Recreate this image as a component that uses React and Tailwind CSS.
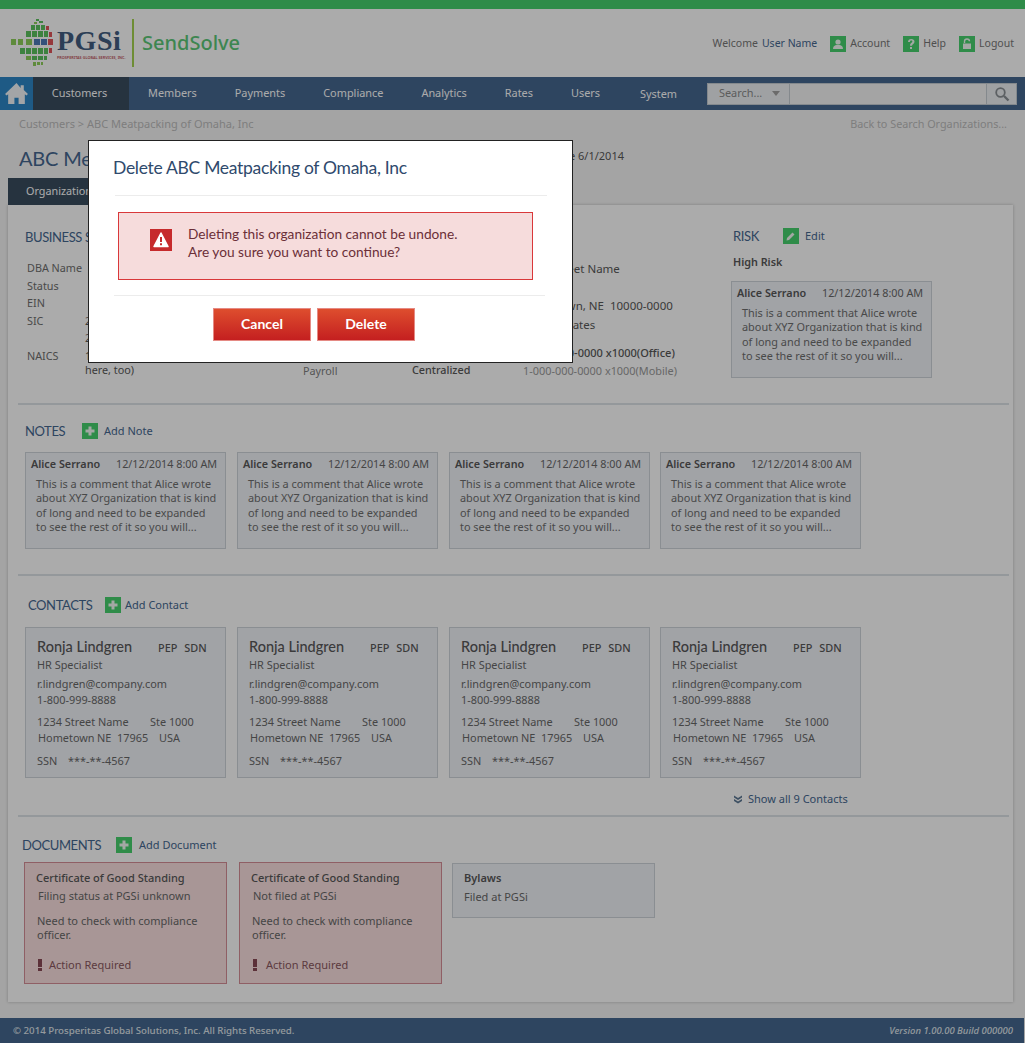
import React from "react";

const NOTE = ["This is a comment that Alice wrote", "about XYZ Organization that is kind", "of long and need to be expanded", "to see the rest of it so you will..."];

function GreenBox({ children, className = "" }) {
  return (
    <span className={"flex h-4 w-4 shrink-0 items-center justify-center bg-[#46d16d] " + className}>
      <svg viewBox="0 0 16 16" className="h-4 w-4">{children}</svg>
    </span>
  );
}

const Plus = () => (
  <GreenBox>
    <path d="M6.500 3.500h3v3h3v3h-3v3h-3v-3h-3v-3h3z" fill="#f4fbf5" />
  </GreenBox>
);

function Logo() {
  const squares = [
    [35, 21, 3, 2, "g"], [38, 23, 4, 2, "g"], [33, 24, 3, 2, "l"],
    [30, 27, 4, 5, "g"], [35, 27, 4, 5, "g"], [40, 27, 4, 5, "g"], [45, 28, 3, 4, "r"],
    [25, 33, 5, 6, "g"], [31, 33, 5, 6, "g"], [37, 33, 5, 6, "g"], [43, 33, 4, 6, "g"], [48, 34, 3, 5, "r"],
    [10, 41, 5, 6, "l"], [17, 41, 5, 6, "l"], [25, 41, 6, 6, "l"], [33, 41, 6, 6, "b"], [40, 41, 6, 6, "b"], [47, 41, 5, 6, "r"],
    [19, 50, 5, 6, "g"], [25, 50, 5, 6, "g"], [31, 50, 5, 6, "g"], [37, 50, 5, 6, "g"], [43, 50, 4, 6, "g"], [48, 50, 3, 5, "r"],
    [25, 58, 5, 4, "l"], [31, 58, 5, 4, "g"], [37, 58, 5, 4, "g"], [43, 58, 3, 4, "g"],
    [32, 64, 3, 4, "l"], [36, 64, 3, 3, "l"], [40, 64, 2, 3, "l"],
  ];
  const col = { g: "#5bc25f", l: "#8ed05a", r: "#e0565a", b: "#4d79b8" };
  return (
    <svg width="44" height="50" viewBox="9 20 44 50" className="shrink-0">
      {squares.map((r, i) => (
        <rect key={i} x={r[0]} y={r[1]} width={r[2]} height={r[3]} fill={col[r[4]]} />
      ))}
    </svg>
  );
}

function NoteCard({ className = "" }) {
  return (
    <div className={"h-[97px] w-[201px] shrink-0 border border-[#ced4da] bg-[#f0f3f8] px-[5px] pt-[2px] " + className}>
      <div className="flex whitespace-nowrap text-[10.800px] leading-[18px]">
        <span className="w-[85px] font-semibold text-[#585858]">Alice Serrano</span>
        <span className="text-[#686868]">12/12/2014 8:00 AM</span>
      </div>
      <div className="ml-[5px] mt-[4px] text-[10.900px] leading-[14.300px] text-[#6e6e6e]">
        {NOTE.map((l) => (
          <div key={l} className="whitespace-nowrap">{l}</div>
        ))}
      </div>
    </div>
  );
}

function ContactCard() {
  return (
    <div className="h-[151px] w-[201px] shrink-0 border border-[#ced4da] bg-[#f0f3f8] pl-[11px] pt-[9px] text-[10.900px] text-[#686868]">
      <div className="flex items-end leading-[20px]">
        <span className="w-[121px] font-['Lato',sans-serif] text-[14.500px] font-medium text-[#585858]">Ronja Lindgren</span>
        <span className="font-medium leading-[18px] text-[#585858]">PEP</span>
        <span className="ml-[7px] font-medium leading-[18px] text-[#585858]">SDN</span>
      </div>
      <div className="leading-[16px]">HR Specialist</div>
      <div className="mt-[3px] leading-[16px]">r.lindgren@company.com</div>
      <div className="leading-[16px]">1-800-999-8888</div>
      <div className="mt-[6px] flex leading-[16px]">
        <span className="w-[113px]">1234 Street Name</span>
        <span>Ste 1000</span>
      </div>
      <div className="ml-px flex leading-[16px]">
        <span className="w-[59px]">Hometown</span>
        <span className="w-[20px]">NE</span>
        <span className="w-[42px]">17965</span>
        <span>USA</span>
      </div>
      <div className="mt-[7px] flex leading-[16px]">
        <span className="w-[31px]">SSN</span>
        <span>***-**-4567</span>
      </div>
    </div>
  );
}

function DocCard({ sub, className = "", markClass = "mr-[7px]" }) {
  return (
    <div className={"h-[122px] w-[203px] shrink-0 border border-[#d58e97] bg-[#fbe0e0] pl-[11px] pt-[7px] text-[11px] " + className}>
      <div className="font-medium leading-[16px] text-[#585858]">Certificate of Good Standing</div>
      <div className="ml-[2px] mt-[2px] leading-[16px] text-[#686868]">{sub}</div>
      <div className="ml-px mt-[10px] leading-[14px] text-[#686868]">
        Need to check with compliance<br />officer.
      </div>
      <div className="mt-[15px] flex items-center leading-[16px] text-[#8a5860]">
        <span className={"ml-[2px] h-[12px] w-[4px] bg-[linear-gradient(#8a4a55_0_65%,transparent_65%_78%,#8a4a55_78%)] " + markClass}></span>
        Action Required
      </div>
    </div>
  );
}

function Row({ label, children, inset = false, leading = "leading-[17.500px]" }) {
  return (
    <div className={"flex text-[10.800px] text-[#6e6e6e] " + leading}>
      <span className="w-[58px] shrink-0">{label}</span>
      <span className={"text-[#585858] " + (inset ? "ml-[6px]" : "")}>{children}</span>
    </div>
  );
}

const H2 = ({ className = "", children }) => (
  <h2 className={"shrink-0 whitespace-nowrap font-['Lato',sans-serif] text-[13px] leading-[16px] tracking-[-0.4px] text-[#456790] " + className}>{children}</h2>
);

const Divider = ({ className = "" }) => (
  <div className={"ml-[10px] h-[2px] w-[991px] bg-[#dde3e8] " + className}></div>
);

const navItems = ["Members", "Payments", "Compliance", "Analytics", "Rates", "Users"];

export default function App() {
  return (
    <div className="relative h-[1043px] w-[1025px] overflow-hidden bg-[#f5f5f5] font-['Noto_Sans','Open_Sans',sans-serif]">
      <div className="h-[9px] bg-[#46d16d]"></div>

      {/* header */}
      <header className="flex h-[68px] items-center bg-white pl-[10px] pr-[11px]">
        <Logo />
        <div className="ml-[3px] mt-[1px] flex w-[64px] flex-col">
          <span className="font-['Liberation_Serif',serif] text-[28px] font-bold leading-[28px] tracking-[0.5px] text-[#425d80]">PGSi</span>
          <span className="whitespace-nowrap text-[3.800px] font-semibold leading-[5px] text-[#c0545a]">PROSPERITAS GLOBAL SERVICES, INC.</span>
        </div>
        <span className="ml-[11px] h-[48px] w-[2px] bg-[#a5d24f]"></span>
        <span className="ml-[8px] text-[20px] font-medium leading-none text-[#5cc878]">SendSolve</span>
        <div className="ml-auto mt-[2px] flex items-center text-[10.500px] text-[#777777]">
          <span>Welcome</span>
          <span className="ml-[4px] text-[#456790]">User Name</span>
          <GreenBox className="ml-[13px]">
            <circle cx="8" cy="6" r="2.600" fill="#f4fbf5" />
            <path d="M3 13c0-3 2-4 3.500-4h3c1.500 0 3.500 1 3.500 4z" fill="#f4fbf5" />
          </GreenBox>
          <span className="ml-[4px]">Account</span>
          <GreenBox className="ml-[13px]">
            <path d="M5 6c0-2 1.300-3 3.200-3S11.500 4 11.500 5.800c0 2.200-2.500 2.300-2.500 4H7c0-2.800 2.300-2.900 2.300-4.200 0-.6-.4-1-1.100-1-.8 0-1.100.5-1.200 1.400zM7 11h2v2H7z" fill="#f4fbf5" />
          </GreenBox>
          <span className="ml-[4px]">Help</span>
          <GreenBox className="ml-[13px]">
            <path d="M4 7.500h8V13H4z" fill="#f4fbf5" />
            <path d="M5.500 7V5.200C5.500 3.800 6.600 3 8 3s2.500.8 2.500 2.200" fill="none" stroke="#f4fbf5" strokeWidth="1.400" />
          </GreenBox>
          <span className="ml-[4px]">Logout</span>
        </div>
      </header>

      {/* nav */}
      <nav className="flex h-[33px] items-center bg-[#456790] text-[10.900px] text-white">
        <div className="flex h-full w-[33px] shrink-0 items-center justify-center bg-[#2e87c7]">
          <svg viewBox="0 0 24 24" className="h-[25px] w-[25px]">
            <path d="M12 2 1 12.500l1.500 1.500L4 12.800V22h6v-6h4v6h6v-9.200l1.500 1.200 1.500-1.500-4-3.800V4h-3v2.700z" fill="#f3f6f9" />
          </svg>
        </div>
        <div className="flex h-full w-[96px] shrink-0 items-center justify-center bg-[#394d5f] pr-[3px]">Customers</div>
        {navItems.map((n) => (
          <div key={n} className="px-[19px]">{n}</div>
        ))}
        <div className="ml-[2px] mt-[2px] px-[19px]">System</div>
        <div className="ml-auto mr-[8px] flex h-[22px] w-[310px] shrink-0 border border-[#c5ccd3] bg-[#f5f5f5]">
          <div className="flex w-[82px] items-center border-r border-[#c5ccd3] bg-[#eef1f4] pl-[11px] text-[#8a8a8a]">
            Search...
            <span className="ml-[10px] h-0 w-0 border-x-[4px] border-t-[5px] border-x-transparent border-t-[#a0a0a0]"></span>
          </div>
          <div className="flex-1"></div>
          <div className="flex w-[30px] items-center justify-center border-l border-[#c5ccd3] bg-[#eef1f4]">
            <svg viewBox="0 0 16 16" className="h-[16px] w-[16px]">
              <circle cx="6.500" cy="6.500" r="4.300" fill="none" stroke="#8a8f94" strokeWidth="1.800" />
              <path d="m10 10 4.500 4.500" stroke="#8a8f94" strokeWidth="2.400" />
            </svg>
          </div>
        </div>
      </nav>

      {/* breadcrumb */}
      <div className="flex h-[28px] items-center pl-[19px] pr-[18px] text-[#bcbcbc]">
        <span className="text-[11px]">Customers &gt; ABC Meatpacking of Omaha, Inc</span>
        <span className="ml-auto mt-px text-[10.800px]">Back to Search Organizations...</span>
      </div>

      {/* title */}
      <div className="flex h-[40px] w-[624px] items-start pl-[19px] pt-[4px]">
        <span className="whitespace-nowrap font-['Lato',sans-serif] text-[20px] leading-[32px] tracking-[-0.2px] text-[#456790]">ABC Meatpacking of Omaha, Inc</span>
        <span className="ml-auto text-[11px] leading-[28px] text-[#585858]">Active Date 6/1/2014</span>
      </div>

      {/* tabs */}
      <div className="flex h-[27px] pl-[8px]">
        <div className="flex h-full w-[120px] items-center bg-[#394d5f] pl-[18px] text-[10.800px] text-white">Organization</div>
      </div>

      {/* card */}
      <main className="ml-[8px] h-[797px] w-[1005px] bg-white shadow-[0_0_3px_rgba(0,0,0,0.25)]">
        <section className="flex h-[198px] pl-[17px]">
          <div className="w-[278px] pt-[24px]">
            <H2>BUSINESS SUMMARY</H2>
            <div className="ml-[2px] mt-[14px]">
              <Row label="DBA Name" inset>ABC Meatpacking</Row>
              <Row label="Status" inset>Active</Row>
              <Row label="EIN" inset>12-3456789</Row>
              <Row label="SIC">2011<br />2015</Row>
              <Row label="NAICS" leading="leading-[14px] mt-[2px]">1234 - Meat Industries<br />here, too)</Row>
            </div>
          </div>
          <div className="flex w-[109px] flex-col justify-end pb-[24px] text-[10.800px] leading-[16px] text-[#808080]">Payroll</div>
          <div className="flex w-[111px] flex-col justify-end pb-[25px] text-[10.800px] font-medium leading-[16px] text-[#585858]">Centralized</div>
          <div className="w-[208px] pt-[55px] text-[11.500px] text-[#585858]">
            <div className="leading-[18.700px]">1234 Street Name</div>
            <div className="leading-[18.700px]">Ste 1000</div>
            <div className="whitespace-pre leading-[18.700px]">Hometown, NE  10000-0000</div>
            <div className="leading-[18.700px]">United States</div>
            <div className="mt-[9px] whitespace-nowrap text-[11px] font-medium leading-[18px] text-[#585858]">1-000-000-0000 x1000(Office)</div>
            <div className="whitespace-nowrap text-[10.900px] leading-[18px] text-[#9a9a9a]">1-000-000-0000 x1000(Mobile)</div>
          </div>
          <div className="pt-[23px]">
            <div className="flex h-[16px] items-center pl-[2px]">
              <H2 className="w-[50px]">RISK</H2>
              <GreenBox>
                <path d="m4 10 5.500-5.500 2 2L6 12l-2.500.5z" fill="#f4fbf5" />
              </GreenBox>
              <span className="ml-[6px] text-[11px] text-[#456790]">Edit</span>
            </div>
            <div className="mt-[10px] pl-[2px] text-[10.800px] font-semibold leading-[16px] text-[#585858]">High Risk</div>
            <NoteCard className="mt-[11px]" />
          </div>
        </section>

        <Divider />

        <section className="pl-[17px]">
          <div className="mt-[18px] flex h-[16px] items-center">
            <H2 className="w-[57px]">NOTES</H2>
            <Plus />
            <span className="ml-[6px] text-[11px] text-[#456790]">Add Note</span>
          </div>
          <div className="mt-[13px] flex gap-[11px]">
            <NoteCard />
            <NoteCard />
            <NoteCard />
            <NoteCard className="-ml-px" />
          </div>
        </section>

        <Divider className="mt-[25px]" />

        <section className="pl-[17px]">
          <div className="mt-[21px] flex h-[16px] items-center pl-[3px]">
            <H2 className="w-[77px]">CONTACTS</H2>
            <Plus />
            <span className="ml-[4px] text-[11px] text-[#456790]">Add Contact</span>
          </div>
          <div className="mt-[14px] flex gap-[11px]">
            <ContactCard />
            <ContactCard />
            <ContactCard />
            <div className="-ml-px"><ContactCard /></div>
          </div>
          <div className="mt-[13px] flex h-[16px] items-center pl-[708px] text-[11px] text-[#456790]">
            <svg viewBox="0 0 10 10" className="mr-[5px] h-[10px] w-[10px]">
              <path d="M1 1.500 5 4l4-2.500V3.500L5 6 1 3.500zM1 5 5 7.500 9 5v2L5 9.500 1 7z" fill="#5d7894" />
            </svg>
            Show all 9 Contacts
          </div>
        </section>

        <Divider className="mt-[8px]" />

        <section className="pl-[16px]">
          <div className="-ml-[2px] mt-[20px] flex h-[16px] items-center">
            <H2 className="w-[94px]">DOCUMENTS</H2>
            <Plus />
            <span className="ml-[7px] text-[11px] text-[#456790]">Add Document</span>
          </div>
          <div className="mt-[9px] flex">
            <DocCard sub="Filing status at PGSi unknown" />
            <DocCard sub="Not filed at PGSi" className="ml-[12px]" markClass="mr-[9px]" />
            <div className="ml-[10px] mt-px h-[55px] w-[203px] border border-[#ced4da] bg-[#f0f3f8] pl-[11px] pt-[6px] text-[11px]">
              <div className="font-semibold leading-[16px] text-[#585858]">Bylaws</div>
              <div className="mt-[3px] leading-[16px] text-[#686868]">Filed at PGSi</div>
            </div>
          </div>
        </section>
      </main>

      {/* footer */}
      <footer className="mt-[16px] flex h-[25px] w-[1024px] items-center bg-[#456790] pl-[13px] pr-[11px] pt-[1px] text-[9.700px] font-medium text-[#dfe5ea]">
        <span>© 2014 Prosperitas Global Solutions, Inc. All Rights Reserved.</span>
        <span className="ml-auto text-[9.500px] italic">Version 1.00.00 Build 000000</span>
      </footer>

      {/* dim overlay */}
      <div className="absolute inset-0 bg-[rgba(0,0,0,0.33)]"></div>

      {/* modal */}
      <div className="absolute left-[88px] top-[140px] h-[223px] w-[485px] border border-[#222222] bg-white font-['Lato',sans-serif]">
        <h1 className="pl-[24px] pt-[15px] text-[17.500px] leading-[24px] tracking-[-0.3px] text-[#2f4a6d]">Delete ABC Meatpacking of Omaha, Inc</h1>
        <div className="ml-[26px] mt-[15px] h-px w-[432px] bg-[#ececec]"></div>
        <div className="ml-[29px] mt-[16px] flex h-[68px] w-[415px] items-center border border-[#d9383a] bg-[#f6dcdc] pb-[6px] pl-[31px] text-[13.700px] leading-[18px] text-[#6b2f38]">
          <svg viewBox="0 0 22 22" className="mb-[6px] mr-[16px] h-[22px] w-[22px] shrink-0">
            <rect width="22" height="22" fill="#c62a2c" />
            <path d="M11 4 18 17.500H4z" fill="#ffffff" stroke="#ffffff" strokeWidth="1.500" strokeLinejoin="round" />
            <path d="M10 8h2v5h-2zM10 14.300h2v2h-2z" fill="#c62a2c" />
          </svg>
          <div>
            Deleting this organization cannot be undone.<br />
            Are you sure you want to continue?
          </div>
        </div>
        <div className="ml-[25px] mt-[15px] h-px w-[431px] bg-[#ececec]"></div>
        <div className="ml-[124px] mt-[12px] flex gap-[6px]">
          <button className="h-[33px] w-[98px] border border-[#e58a84] bg-[linear-gradient(#de4e2e,#c41f20)] pb-[2px] text-[14px] font-bold text-white">Cancel</button>
          <button className="h-[33px] w-[98px] border border-[#e58a84] bg-[linear-gradient(#de4e2e,#c41f20)] pb-[2px] text-[14px] font-bold text-white">Delete</button>
        </div>
      </div>
    </div>
  );
}
